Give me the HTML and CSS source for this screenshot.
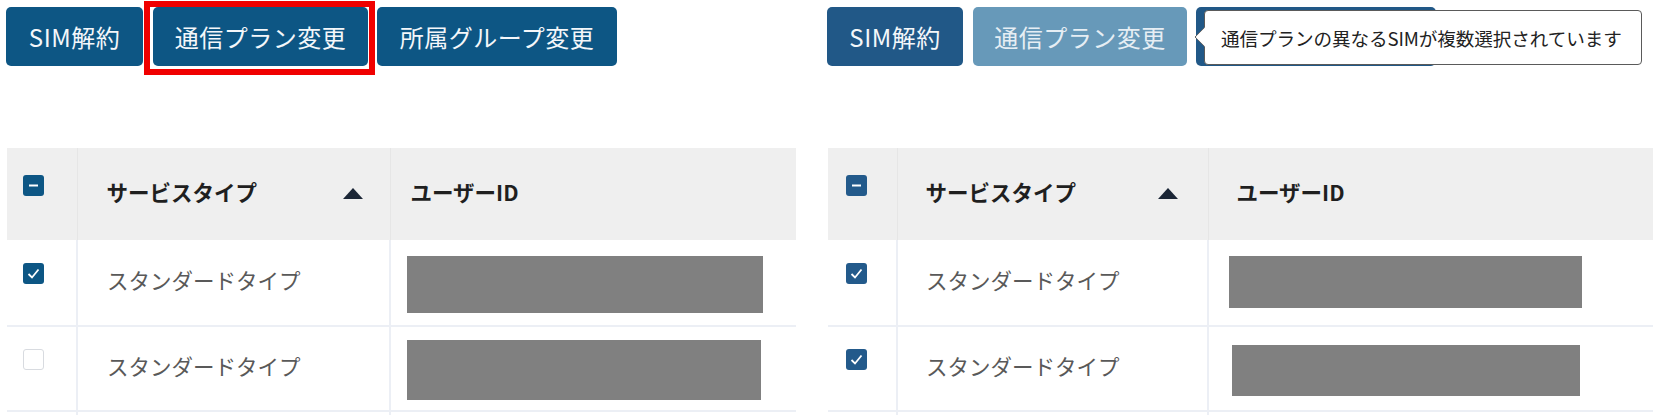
FILE: index.html
```html
<!DOCTYPE html>
<html lang="ja">
<head>
<meta charset="utf-8">
<link rel="stylesheet" href="styles.css">
</head>
<body>
<div class="page">
  <section class="panel panel-left">
    <div class="btn-row">
      <button class="btn btn-sim">SIM解約</button>
      <button class="btn btn-plan">通信プラン変更</button>
      <button class="btn btn-group">所属グループ変更</button>
      <div class="highlight"></div>
    </div>
    <table class="grid grid-left">
      <thead>
        <tr>
          <th class="c-check"><span class="cb cb-on"><svg viewBox="0 0 21 21"><rect x="6" y="9.5" width="9" height="2" fill="#fff"/></svg></span></th>
          <th class="c-type"><div class="th-inner"><span>サービスタイプ</span><span class="tri"></span></div></th>
          <th class="c-user">ユーザーID</th>
        </tr>
      </thead>
      <tbody>
        <tr class="r1">
          <td class="c-check"><span class="cb cb-on"><svg viewBox="0 0 21 21"><path d="M5.5 11 L9 14.5 L15.5 6.5" fill="none" stroke="#fff" stroke-width="1.8"/></svg></span></td>
          <td class="c-type">スタンダードタイプ</td>
          <td class="c-user"><div class="mask mask-l1"></div></td>
        </tr>
        <tr class="r2">
          <td class="c-check"><span class="cb cb-off"></span></td>
          <td class="c-type">スタンダードタイプ</td>
          <td class="c-user"><div class="mask mask-l2"></div></td>
        </tr>
        <tr class="r3"><td class="c-check"></td><td class="c-type"></td><td class="c-user"></td></tr>
      </tbody>
    </table>
  </section>

  <section class="panel panel-right">
    <div class="btn-row">
      <button class="btn btn-sim btn-alt">SIM解約</button>
      <button class="btn btn-plan btn-disabled">通信プラン変更</button>
      <button class="btn btn-group btn-alt btn-covered" aria-label="所属グループ変更"></button>
      <div class="tooltip">通信プランの異なるSIMが複数選択されています</div>
    </div>
    <table class="grid grid-right">
      <thead>
        <tr>
          <th class="c-check"><span class="cb cb-alt"><svg viewBox="0 0 21 21"><rect x="6" y="9.5" width="9" height="2" fill="#fff"/></svg></span></th>
          <th class="c-type"><div class="th-inner"><span>サービスタイプ</span><span class="tri"></span></div></th>
          <th class="c-user">ユーザーID</th>
        </tr>
      </thead>
      <tbody>
        <tr class="r1">
          <td class="c-check"><span class="cb cb-alt"><svg viewBox="0 0 21 21"><path d="M5.5 11 L9 14.5 L15.5 6.5" fill="none" stroke="#fff" stroke-width="1.8"/></svg></span></td>
          <td class="c-type">スタンダードタイプ</td>
          <td class="c-user"><div class="mask mask-r1"></div></td>
        </tr>
        <tr class="r2">
          <td class="c-check"><span class="cb cb-alt"><svg viewBox="0 0 21 21"><path d="M5.5 11 L9 14.5 L15.5 6.5" fill="none" stroke="#fff" stroke-width="1.8"/></svg></span></td>
          <td class="c-type">スタンダードタイプ</td>
          <td class="c-user"><div class="mask mask-r2"></div></td>
        </tr>
        <tr class="r3"><td class="c-check"></td><td class="c-type"></td><td class="c-user"></td></tr>
      </tbody>
    </table>
  </section>
</div>
</body>
</html>
```

FILE: styles.css
```css
* { box-sizing: border-box; }
html, body {
  margin: 0;
  padding: 0;
  background: #fff;
  overflow: hidden;
}
body {
  width: 1653px;
  height: 415px;
  font-family: "Noto Sans CJK JP", "Noto Sans", sans-serif;
}
.page {
  display: flex;
  width: 1653px;
  height: 415px;
}
.panel {
  overflow: hidden;
}
.panel-left {
  width: 820px;
  padding-left: 7px;
}
.panel-right {
  flex: 1;
  padding-left: 8px;
}

/* buttons */
.btn-row {
  position: relative;
  display: flex;
  gap: 9px;
  height: 148px;
  padding-top: 7px;
  margin-left: -1px;
  align-items: flex-start;
}
.btn {
  height: 59px;
  border: none;
  border-radius: 5px;
  background: #0d5684;
  color: #f4f7fa;
  font-family: "Noto Sans CJK JP", sans-serif;
  font-size: 24px;
  font-weight: 400;
  padding: 0;
  display: flex;
  align-items: center;
  justify-content: center;
  letter-spacing: 0.5px;
}
.btn-sim { width: 137px; }
.btn-plan { width: 215px; margin-left: 1px; }
.btn-group { width: 240px; }
.panel-right .btn-row { gap: 9px; }
.panel-right .btn-sim { width: 136px; }
.panel-right .btn-plan { width: 214px; margin-left: 1px; }
.btn-alt { background: #215887; }
.btn-disabled { background: #6799b9; color: #e6eef4; }

.highlight {
  position: absolute;
  left: 138px;
  top: 1px;
  width: 231px;
  height: 74px;
  border: 6px solid #f00000;
}

.tooltip {
  position: absolute;
  left: 377px;
  top: 10px;
  width: 438px;
  height: 55px;
  background: #fff;
  border: 1.5px solid #5a5a5a;
  border-radius: 4px;
  font-size: 18.6px;
  color: #222;
  display: flex;
  align-items: center;
  padding-left: 16px;
  white-space: nowrap;
  letter-spacing: -0.1px;
}
.tooltip::before {
  content: "";
  position: absolute;
  left: -8px;
  top: 19px;
  width: 13px;
  height: 13px;
  background: #fff;
  border-left: 1.5px solid #5a5a5a;
  border-bottom: 1.5px solid #5a5a5a;
  transform: rotate(45deg);
  border-radius: 0 0 0 2px;
}

/* table */
.grid {
  border-collapse: collapse;
  table-layout: fixed;
  font-size: 21.5px;
}
.grid-left { width: 789px; }
.grid-right { width: 840px; }
.grid th {
  background: #efefef;
  height: 92px;
  text-align: left;
  font-weight: 700;
  color: #1f1f1f;
  padding: 0 0 6px 0;
  border-left: 1px solid #e6e6e6;
}
.grid th:first-child { border-left: none; }
.grid td {
  padding: 0;
  color: #595959;
  border-left: 2px solid #eceff5;
  border-bottom: 2px solid #eceff5;
  vertical-align: middle;
}
.grid td:first-child { border-left: none; }
.grid td.c-type { padding-bottom: 6px; }
.grid .r1 td { height: 86px; }
.grid .r2 td { height: 85px; }
.grid .r3 td { height: 20px; }

.grid-left .c-check { width: 70px; padding-left: 16px; }
.grid-left .c-type { width: 313px; padding-left: 29px; }
.grid-left th.c-user { padding-left: 20px; }
.grid-left td.c-user { padding-left: 16px; }
.grid-left th.c-type { padding-right: 27px; }

.grid-right .c-check { width: 69px; padding-left: 18px; }
.grid-right .c-type { width: 311px; padding-left: 28px; }
.grid-right th.c-user { padding-left: 28px; }
.grid-right td.c-user { padding-left: 20px; }
.grid-right th.c-type { padding-right: 30px; }

.grid th.c-check, .grid td.c-check { padding-bottom: 18px; }

.th-inner {
  display: flex;
  align-items: center;
  justify-content: space-between;
}
.tri {
  width: 0;
  height: 0;
  border-left: 10px solid transparent;
  border-right: 10px solid transparent;
  border-bottom: 11px solid #1b2636;
  margin-top: 4px;
}

.cb {
  display: block;
  width: 21px;
  height: 21px;
  border-radius: 3px;
}
.cb svg { display: block; width: 21px; height: 21px; }
.cb-on { background: #0d5684; }
.cb-alt { background: #235a8b; }
.cb-off { background: #fff; border: 1.5px solid #d8dbe0; }

.mask {
  background: #808080;
}
.mask-l1 { width: 356px; height: 57px; margin-top: 3px; }
.mask-l2 { width: 354px; height: 60px; margin-top: 3px; }
.mask-r1 { width: 353px; height: 52px; margin-top: -2px; }
.mask-r2 { width: 348px; height: 51px; margin-left: 3px; margin-top: 4px; }
```
